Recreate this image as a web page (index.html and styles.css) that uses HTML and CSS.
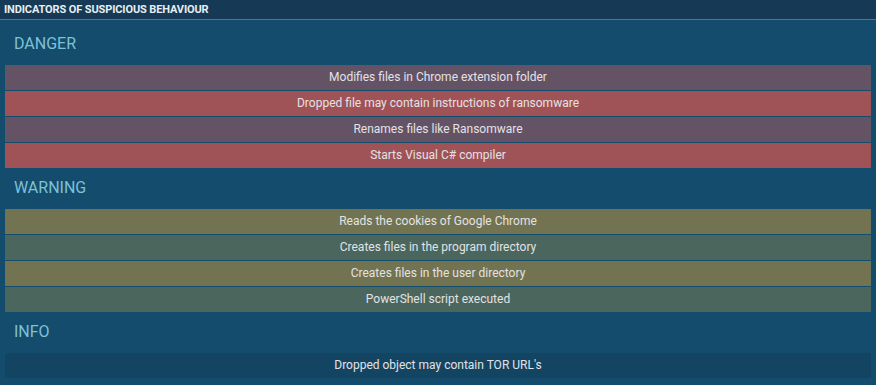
FILE: index.html
```html
<!DOCTYPE html>
<html>
<head>
<meta charset="utf-8">
<link rel="stylesheet" href="styles.css">
</head>
<body>
<div class="panel">
  <div class="panel-title">INDICATORS OF SUSPICIOUS BEHAVIOUR</div>
  <div class="panel-body">
    <div class="section first">
      <div class="section-title">DANGER</div>
      <div class="rows">
        <div class="row purple">Modifies files in Chrome extension folder</div>
        <div class="row red">Dropped file may contain instructions of ransomware</div>
        <div class="row purple">Renames files like Ransomware</div>
        <div class="row red">Starts Visual C# compiler</div>
      </div>
    </div>
    <div class="section">
      <div class="section-title">WARNING</div>
      <div class="rows">
        <div class="row olive">Reads the cookies of Google Chrome</div>
        <div class="row green">Creates files in the program directory</div>
        <div class="row olive">Creates files in the user directory</div>
        <div class="row green">PowerShell script executed</div>
      </div>
    </div>
    <div class="section">
      <div class="section-title">INFO</div>
      <div class="rows">
        <div class="row info">Dropped object may contain TOR URL's</div>
      </div>
    </div>
  </div>
</div>
</body>
</html>
```
FILE: styles.css
```css
html, body {
  margin: 0;
  padding: 0;
  background: #134c6c;
  font-family: Roboto, "Liberation Sans", sans-serif;
}
.panel {
  width: 876px;
  height: 385px;
  background: #134c6c;
  overflow: hidden;
}
.panel-title {
  height: 19px;
  line-height: 19px;
  background: #163a55;
  border-bottom: 1px solid #3a7c9c;
  color: #e6eef3;
  font-size: 11px;
  font-weight: 700;
  letter-spacing: -0.12px;
  padding-left: 4px;
}
.panel-body {
  padding: 0 5px;
}
.section-title {
  padding: 10px 0 11px 9px;
  line-height: 20px;
  font-size: 16px;
  color: #7fc1d5;
}
.section.first .section-title {
  padding-top: 14px;
}
.rows {
  display: flex;
  flex-direction: column;
  gap: 1px;
}
.row {
  height: 25px;
  line-height: 25px;
  text-align: center;
  font-size: 12px;
  color: #e2e2e6;
}
.purple { background: #645265; }
.red { background: #a05357; }
.olive { background: #727350; }
.green { background: #4b665c; }
.info { background: #134562; }
```
